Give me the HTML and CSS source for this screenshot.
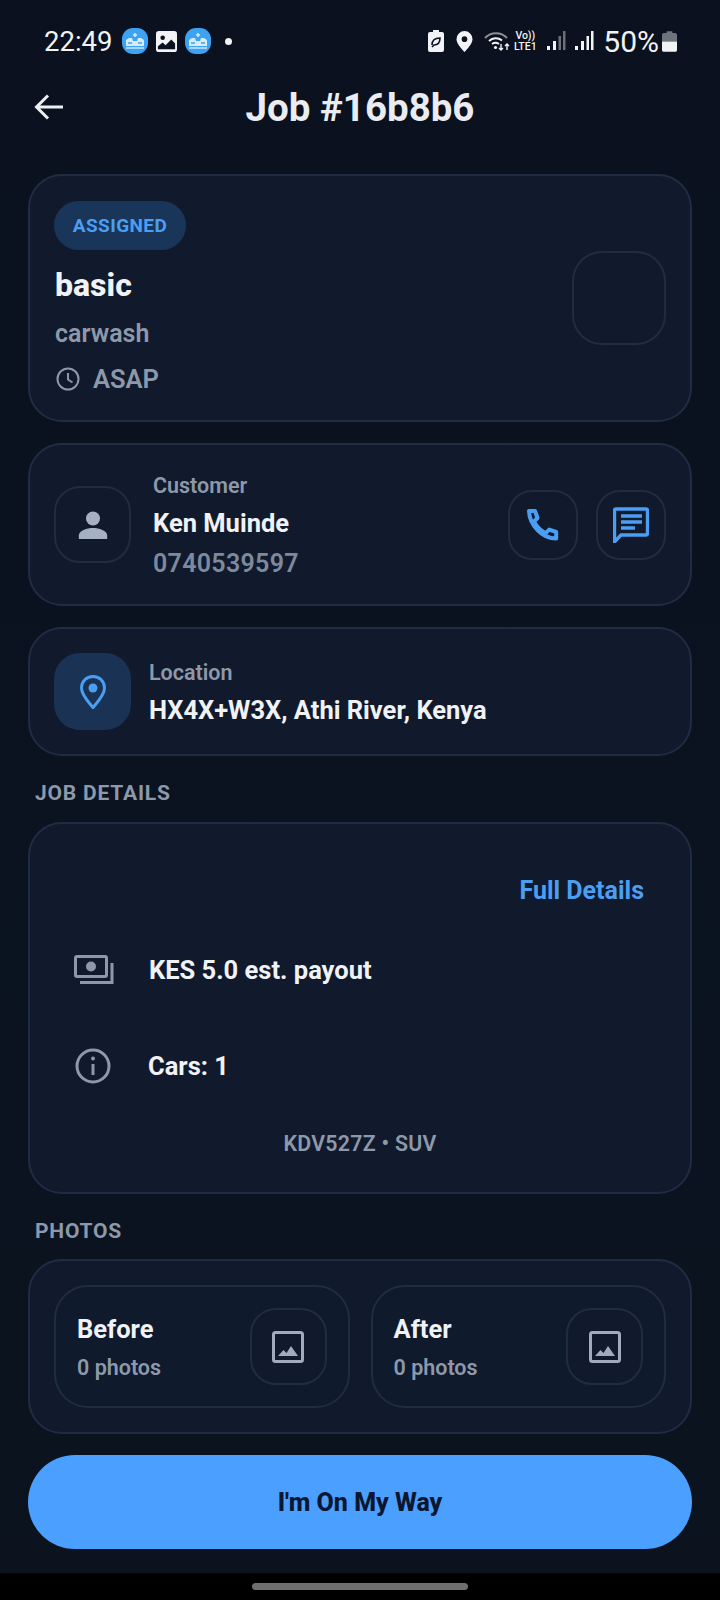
FILE: index.html
```html
<!DOCTYPE html>
<html lang="en">
<head>
<meta charset="utf-8">
<title>Job #16b8b6</title>
<link rel="stylesheet" href="styles.css">
</head>
<body>
<div class="screen">
  <div class="status">
    <div class="status-left">
      <span class="time">22:49</span>
      <svg class="app" viewBox="0 0 26 26"><rect width="26" height="26" rx="11" fill="#3ea2f2"/><path d="M13 5v4M11 7h4" stroke="#d5ecff" stroke-width="1.500"/><path d="M4 12l3-2h3l1 3h4l1-3h3l3 2v6H4z" fill="#d5ecff"/><path d="M6 15h4M16 15h4" stroke="#3ea2f2" stroke-width="1.400"/><path d="M4 20h18" stroke="#d5ecff" stroke-width="1.400"/></svg>
      <svg class="gallery" viewBox="0 0 22 22"><rect width="22" height="22" rx="3" fill="#f1f3f6"/><circle cx="7" cy="7" r="2.400" fill="#0b111e"/><path d="M2 19v-3l5-4 3 3 6-6 4 4v6z" fill="#0b111e"/></svg>
      <svg class="app" viewBox="0 0 26 26"><rect width="26" height="26" rx="11" fill="#3ea2f2"/><path d="M13 5v4M11 7h4" stroke="#d5ecff" stroke-width="1.500"/><path d="M4 12l3-2h3l1 3h4l1-3h3l3 2v6H4z" fill="#d5ecff"/><path d="M6 15h4M16 15h4" stroke="#3ea2f2" stroke-width="1.400"/><path d="M4 20h18" stroke="#d5ecff" stroke-width="1.400"/></svg>
      <span class="dot"></span>
    </div>
    <div class="status-right">
      <svg class="i-batsave" viewBox="0 0 16 22"><path d="M5 0h6v2h3a2 2 0 0 1 2 2v16a2 2 0 0 1-2 2H2a2 2 0 0 1-2-2V4a2 2 0 0 1 2-2h3z" fill="#f1f3f6"/><path d="M4 15c0-5 3-7 8-7 0 5-2 7-6 7l-2 2" fill="none" stroke="#0b111e" stroke-width="1.600"/></svg>
      <svg class="i-pin" viewBox="0 0 18 22"><path fill-rule="evenodd" d="M9 0a8.500 8.500 0 0 1 8.500 8.500C17.500 14 9 22 9 22S.5 14 .5 8.500A8.500 8.500 0 0 1 9 0zm0 5.500a3 3 0 1 0 0 6 3 3 0 0 0 0-6z" fill="#f1f3f6"/></svg>
      <svg class="i-wifi" viewBox="0 0 26 22"><path d="M1 8a15 15 0 0 1 22 0" fill="none" stroke="#8d929b" stroke-width="2"/><path d="M5 11a10 10 0 0 1 13-.5M8 14a6 6 0 0 1 7 0" fill="none" stroke="#f1f3f6" stroke-width="2"/><circle cx="11.500" cy="17.500" r="1.600" fill="#f1f3f6"/><path d="M17 14v6M15 18l2 2 2-2M23 20v-6M21 16l2-2 2 2" fill="none" stroke="#f1f3f6" stroke-width="1.400"/></svg>
      <span class="volte"><span>Vo))</span><span>LTE1</span></span>
      <svg class="i-signal" viewBox="0 0 20 22"><rect x="1" y="16" width="3" height="4" fill="#f1f3f6"/><rect x="7" y="11" width="3" height="9" fill="#f1f3f6"/><rect x="12.500" y="6" width="2.500" height="14" fill="#6b7078"/><rect x="17" y="1" width="2.500" height="19" fill="#6b7078"/></svg>
      <svg class="i-signal two" viewBox="0 0 20 22"><rect x="1" y="16" width="3" height="4" fill="#f1f3f6"/><rect x="7" y="11" width="3" height="9" fill="#f1f3f6"/><rect x="12.500" y="6" width="2.500" height="14" fill="#f1f3f6"/><rect x="17" y="1" width="2.500" height="19" fill="#f1f3f6"/></svg>
      <span class="pct">50%</span>
      <svg class="i-bat" viewBox="0 0 16 22"><path d="M5 0h6v2h3a2 2 0 0 1 2 2v7H0V4a2 2 0 0 1 2-2h3z" fill="#6f747c"/><path d="M0 11h16v9a2 2 0 0 1-2 2H2a2 2 0 0 1-2-2z" fill="#f1f3f6"/></svg>
    </div>
  </div>

  <header class="topbar">
    <svg class="back" viewBox="0 0 30 28"><path d="M29 14H3M14 2.500L2.500 14 14 25.500" fill="none" stroke="#eceff4" stroke-width="3"/></svg>
    <h1 class="title">Job #16b8b6</h1>
  </header>

  <main class="content">
    <section class="card job">
      <div class="job-main">
        <span class="pill">ASSIGNED</span>
        <div class="job-name">basic</div>
        <div class="job-type">carwash</div>
        <div class="job-when">
          <svg class="i-clock" viewBox="0 0 24 24"><circle cx="12" cy="12" r="10.500" fill="none" stroke="#8d99ab" stroke-width="2"/><path d="M12 6v6.500l4.500 3" fill="none" stroke="#8d99ab" stroke-width="2"/></svg>
          <span>ASAP</span>
        </div>
      </div>
      <div class="tile tile-big"></div>
    </section>

    <section class="card row customer">
      <div class="tile">
        <svg class="i-30" viewBox="0 0 30 30"><circle cx="15" cy="8.500" r="7" fill="#a5b0c2"/><path d="M.8 29v-3.500C.8 20.500 9 18 15 18s14.200 2.500 14.200 7.500V29z" fill="#a5b0c2"/></svg>
      </div>
      <div class="who">
        <div class="label">Customer</div>
        <div class="strong">Ken Muinde</div>
        <div class="phone">0740539597</div>
      </div>
      <div class="actions">
        <div class="tile tile-btn">
          <svg class="i-34" viewBox="0 0 34 34"><path d="M3 3h6l2.500 7-3.600 3.500c2.500 5 6.500 9 11.700 11.700l3.600-3.600 7 2.400v6.500C16 30.500 3.500 17 3 3z" fill="none" stroke="#4b9ff2" stroke-width="4" stroke-linejoin="round"/></svg>
        </div>
        <div class="tile tile-btn">
          <svg class="i-36" viewBox="0 0 36 36"><path d="M3 2h30a1.500 1.500 0 0 1 1.500 1.500v23A1.500 1.500 0 0 1 33 28H8l-6.500 7V3.500A1.500 1.500 0 0 1 3 2z" fill="none" stroke="#4b9ff2" stroke-width="3.400"/><path d="M8 9h21M8 15h21M8 21h14" stroke="#4b9ff2" stroke-width="3.400"/></svg>
        </div>
      </div>
    </section>

    <section class="card row location">
      <div class="tile tile-blue">
        <svg class="i-pinblue" viewBox="0 0 26 34"><path d="M13 1.500C6.500 1.500 1.500 6.500 1.500 13c0 7 7 14 11.500 19.500C17.500 27 24.500 20 24.500 13 24.500 6.500 19.500 1.500 13 1.500z" fill="none" stroke="#4b9ff2" stroke-width="3"/><circle cx="13" cy="13" r="4.500" fill="#4b9ff2"/></svg>
      </div>
      <div class="where">
        <div class="label">Location</div>
        <div class="strong">HX4X+W3X, Athi River, Kenya</div>
      </div>
    </section>

    <h2 class="section">JOB DETAILS</h2>

    <section class="card details">
      <div class="full">Full Details</div>
      <div class="detail pay">
        <svg class="i-money" viewBox="0 0 40 30"><rect x="1.500" y="1.500" width="31" height="20" rx="1.500" fill="none" stroke="#8d99ab" stroke-width="3"/><circle cx="17" cy="11.500" r="5" fill="#8d99ab"/><path d="M38 8v19.500H6" fill="none" stroke="#8d99ab" stroke-width="3"/></svg>
        <span>KES 5.0 est. payout</span>
      </div>
      <div class="detail cars">
        <svg class="i-info" viewBox="0 0 36 36"><circle cx="18" cy="18" r="16" fill="none" stroke="#8d99ab" stroke-width="3"/><circle cx="18" cy="10.500" r="2" fill="#8d99ab"/><path d="M18 16v11" stroke="#8d99ab" stroke-width="3"/></svg>
        <span>Cars: 1</span>
      </div>
      <div class="plate">KDV527Z • SUV</div>
    </section>

    <h2 class="section photos-head">PHOTOS</h2>

    <section class="card photos">
      <div class="photo">
        <div class="photo-text">
          <div class="photo-name">Before</div>
          <div class="photo-count">0 photos</div>
        </div>
        <div class="tile">
          <svg class="i-photo" viewBox="0 0 32 32"><rect x="1.500" y="1.500" width="29" height="29" rx="2" fill="none" stroke="#a0abbd" stroke-width="3"/><path d="M6 25l5.500-6 3 3 4.500-7 7 10z" fill="#a0abbd"/></svg>
        </div>
      </div>
      <div class="photo">
        <div class="photo-text">
          <div class="photo-name">After</div>
          <div class="photo-count">0 photos</div>
        </div>
        <div class="tile">
          <svg class="i-photo" viewBox="0 0 32 32"><rect x="1.500" y="1.500" width="29" height="29" rx="2" fill="none" stroke="#a0abbd" stroke-width="3"/><path d="M6 25l5.500-6 3 3 4.500-7 7 10z" fill="#a0abbd"/></svg>
        </div>
      </div>
    </section>

    <button class="cta" type="button">I'm On My Way</button>
  </main>

  <div class="navbar"><span class="handle"></span></div>
</div>
</body>
</html>
```

FILE: styles.css
```css
* { box-sizing: border-box; }
html, body { margin: 0; padding: 0; background: #000; }
body { font-family: Roboto, "Liberation Sans", sans-serif; color: #eef1f6; }
.screen { width: 720px; height: 1600px; display: flex; flex-direction: column; background: linear-gradient(#0b111e, #0a1320 60%, #0c131e); overflow: hidden; }

.status { height: 80px; padding: 26px 43px 0 44px; display: flex; justify-content: space-between; align-items: flex-start; color: #f1f3f6; }
.status-left, .status-right { display: flex; align-items: center; height: 30px; }
.time { font-size: 27.500px; font-weight: 400; width: 78px; }
.app { width: 26px; height: 26px; }
.gallery { width: 21px; height: 21px; margin: 0 8px; }
.dot { width: 7px; height: 7px; border-radius: 50%; background: #f1f3f6; margin-left: 14px; }
.i-batsave { width: 16px; height: 22px; margin-right: 12px; }
.i-pin { width: 17px; height: 21px; margin-right: 9px; }
.i-wifi { width: 30px; height: 22px; }
.volte { display: flex; flex-direction: column; align-items: center; font-size: 10.500px; line-height: 11px; font-weight: 500; width: 26px; }
.i-signal { width: 20px; height: 22px; margin-left: 8px; }
.i-signal.two { margin-left: 8px; }
.pct { font-size: 30px; font-weight: 400; margin-left: 9px; }
.i-bat { width: 15px; height: 21px; margin-left: 3px; }

.topbar { position: relative; height: 55px; display: flex; align-items: center; justify-content: center; margin-bottom: 39px; }
.back { position: absolute; left: 34px; top: 13px; width: 30px; height: 28px; }
.title { margin: 0; font-size: 38.500px; font-weight: 700; color: #e9ecf2; }

.content { flex: 1; padding: 0 28px; display: flex; flex-direction: column; }
.card { border: 2px solid #202c42; border-radius: 34px; background: #111a2c; padding: 24px; }
.row { display: flex; align-items: center; }

.tile { flex: none; width: 77px; height: 77px; border: 2px solid #202c42; border-radius: 26px; background: #101a2c; display: flex; align-items: center; justify-content: center; }
.tile-big { width: 94px; height: 94px; border-radius: 30px; }
.tile-btn { width: 70px; height: 70px; border-radius: 24px; }
.tile-blue { background: #1a3254; border: 0; }

.job { height: 248px; display: flex; justify-content: space-between; align-items: center; }
.job-main { display: flex; flex-direction: column; align-items: flex-start; margin-top: -2px; }
.pill { height: 49px; width: 132px; border-radius: 25px; background: #19355a; color: #4b9ff2; font-size: 19px; font-weight: 700; letter-spacing: 0.4px; display: flex; align-items: center; justify-content: center; }
.job-name { font-size: 32px; font-weight: 800; line-height: 40px; margin: 15px 0 0 1px; color: #f0f2f6; }
.job-type { font-size: 25px; font-weight: 600; line-height: 30px; margin: 14px 0 0 1px; color: #8d99ab; }
.job-when { display: flex; align-items: center; font-size: 25.500px; font-weight: 600; line-height: 30px; margin-top: 15px; color: #8d99ab; }
.i-clock { width: 24px; height: 24px; margin: 0 13px 0 2px; }

.customer { margin-top: 21px; height: 163px; }
.who { margin-left: 22px; flex: 1; padding-top: 2px; }
.label { font-size: 21.500px; font-weight: 600; line-height: 26px; color: #8d99ab; }
.strong { font-size: 25.500px; font-weight: 700; line-height: 30px; color: #f0f2f6; }
.who .strong { margin-top: 9px; }
.phone { font-size: 25px; font-weight: 600; line-height: 30px; margin-top: 11px; letter-spacing: 0.3px; color: #7d8a9e; }
.actions { display: flex; gap: 18px; }
.i-30 { width: 30px; height: 30px; }
.i-34 { width: 34px; height: 34px; }
.i-36 { width: 36px; height: 36px; }

.location { margin-top: 21px; height: 129px; }
.where { margin-left: 18px; padding-top: 2px; }
.where .strong { margin-top: 9px; }
.i-pinblue { width: 26px; height: 34px; }

.section { margin: 24px 0 0 7px; font-size: 21px; line-height: 26px; font-weight: 700; letter-spacing: 0.8px; color: #8d99ab; }

.details { margin-top: 16px; height: 372px; padding: 0; position: relative; display: flex; flex-direction: column; }
.full { align-self: flex-end; margin: 52px 46px 0 0; font-size: 25px; font-weight: 700; line-height: 30px; color: #4b9ff2; }
.detail { display: flex; align-items: center; font-size: 25.500px; font-weight: 700; line-height: 30px; color: #f0f2f6; }
.detail span { margin-left: 35px; }
.pay { margin: 49px 0 0 44px; }
.cars { margin: 63px 0 0 45px; }
.i-money { width: 40px; height: 30px; }
.i-info { width: 36px; height: 36px; margin-right: 2px; }
.plate { margin-top: 47px; text-align: center; font-size: 21.300px; font-weight: 600; line-height: 26px; letter-spacing: 0.3px; color: #8d99ab; }

.photos-head { margin-top: 24px; }
.photos { margin-top: 15px; height: 175px; display: flex; gap: 21px; align-items: center; }
.photo { flex: 1; height: 123px; border: 2px solid #202c42; border-radius: 34px; background: #0f1a2c; display: flex; align-items: center; justify-content: space-between; padding: 0 21px; }
.photo-name { font-size: 25.500px; font-weight: 700; line-height: 30px; color: #f0f2f6; margin-top: 1px; }
.photo-count { font-size: 21.500px; font-weight: 600; line-height: 26px; margin-top: 11px; color: #8d99ab; }
.i-photo { width: 32px; height: 32px; }

.cta { margin-top: 21px; height: 94px; width: 100%; border: 0; border-radius: 47px; background: #4b9fff; color: #0b1730; font-family: inherit; font-size: 25px; font-weight: 800; flex: none; }

.navbar { height: 27px; background: #000; display: flex; justify-content: center; padding-top: 10px; flex: none; }
.handle { width: 216px; height: 7px; border-radius: 4px; background: #6f6f6f; }
```
